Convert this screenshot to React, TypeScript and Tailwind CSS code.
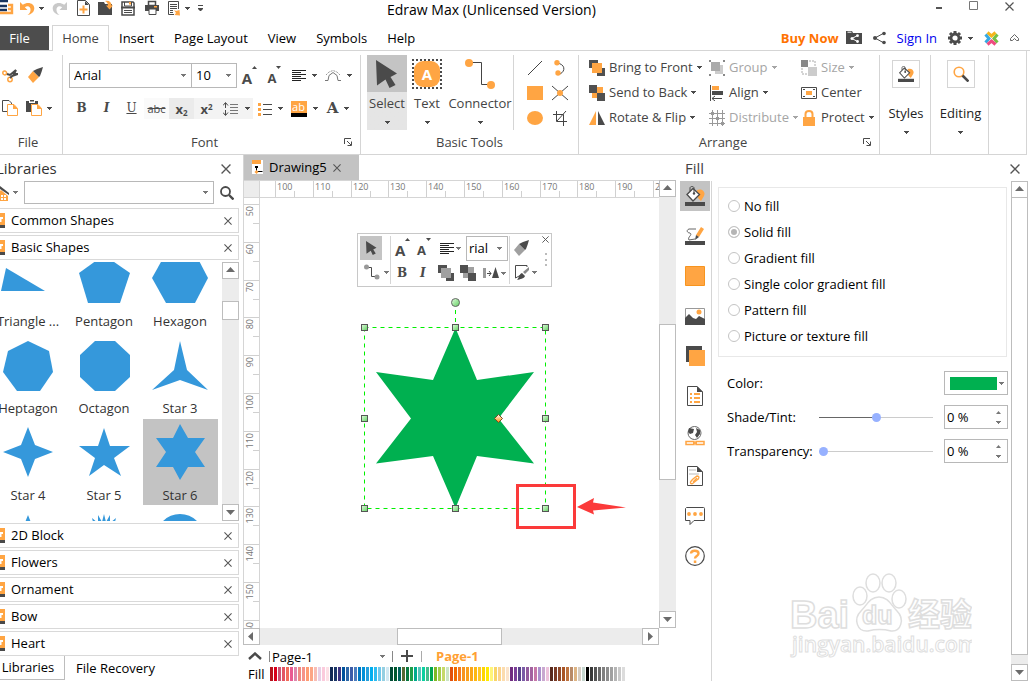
import type { ReactNode } from 'react'
import clsx from 'clsx'

const DARK = '#4a4a4a'
const ORANGE = '#ffa543'
const BLUE = '#3598db'

function Svg({ w = 16, h = 16, children }: { w?: number; h?: number; children: ReactNode }) {
  return (
    <svg width={w} height={h} viewBox={`0 0 ${w} ${h}`} fill="none" className="block shrink-0">
      {children}
    </svg>
  )
}

const Caret = ({ color = DARK }: { color?: string }) => (
  <Svg w={5} h={3}><path d="M0 0h5v1H4v1H3v1H2V2H1V1H0z" fill={color} /></Svg>
)

const Cross = ({ size = 9 }: { size?: number }) => (
  <svg width={size} height={size} viewBox="0 0 9 9" className="block shrink-0">
    <path d="M.5.5l8 8M8.5.5l-8 8" stroke="#555" strokeWidth="1.2" />
  </svg>
)

/* ---------- icons ---------- */

const LogoIcon = () => (
  <Svg w={14} h={16}>
    <path d="M0 1h8M0 6h7M0 10h7" stroke="#16335f" strokeWidth="2.4" />
    <path d="M8 5h4v8H0M8 9h4" stroke={ORANGE} strokeWidth="2.4" />
  </Svg>
)
const UndoIcon = ({ flip, color = ORANGE }: { flip?: boolean; color?: string }) => (
  <Svg w={15} h={16}>
    <g transform={flip ? 'translate(15 0) scale(-1 1)' : undefined}>
      <path d="M0 2v8h7.500L4.800 7.300C8 5 11 7 10.500 10.500c-.3 2-1.500 3.500-3 4.500 4-.7 6.500-3 6.800-6.500C14.500 3.500 8 1.200 2.800 4.800z" fill={color} />
    </g>
  </Svg>
)
const NewIcon = () => (
  <Svg w={13} h={16}>
    <path d="M.5.5h8l4 4v11H.5z" stroke={DARK} /><path d="M8 1v4h4z" fill={DARK} />
    <path d="M6.500 5.500v8M2.500 9.500h8" stroke={ORANGE} strokeWidth="2" />
  </Svg>
)
const OpenIcon = () => (
  <Svg w={15} h={16}>
    <path d="M0 2h6l1 2h7v11H0z" fill={DARK} />
    <path d="M7 1c4-.8 6.500 1 6.500 4.500H15L11.500 9.500 8 5.500h2C10 3.500 9 2 7 1z" fill={ORANGE} />
  </Svg>
)
const SaveIcon = () => (
  <Svg w={14} h={16}>
    <path d="M1 2h11l1 1v12H1z" stroke={DARK} strokeWidth="1.500" /><path d="M3.500 2v4h7V2M3 10.500h8M3 12.500h8" stroke={DARK} />
    <path d="M0 7.500h14" stroke={DARK} strokeWidth="2" /><path d="M8 2h2v2.500H8z" fill={ORANGE} />
  </Svg>
)
const PrintIcon = () => (
  <Svg w={15} h={16}>
    <path d="M3.500 1.500h7v4h-7z" stroke={DARK} strokeWidth="1.500" /><path d="M0 5h14v6H0z" fill={DARK} />
    <path d="M4 9h7v5.500H4z" fill="#fff" stroke={DARK} /><path d="M9 6h3v1.500H9z" fill={ORANGE} />
  </Svg>
)
const ReportIcon = () => (
  <Svg w={13} h={16}>
    <path d="M6 14.500H.5v-13h10V9" stroke={DARK} /><path d="M2 4.500h7M2 6.500h7M2 8.500h7M2 10.500h3M2 12.500h3" stroke={DARK} />
    <path d="M6 10l2 1 3.500-1 .5 5.500-5.500-.5L8 13z" fill={ORANGE} />
  </Svg>
)
const ScissorsIcon = () => (
  <Svg>
    <circle cx="2.700" cy="6" r="1.900" stroke={ORANGE} strokeWidth="1.500" />
    <circle cx="8" cy="12.500" r="2.200" stroke={ORANGE} strokeWidth="1.500" />
    <path d="M5 7l3 1 6-5-2 4h4l-6 2-2 2" stroke={DARK} strokeWidth="2" />
  </Svg>
)
const BrushIcon = ({ color = ORANGE }: { color?: string }) => (
  <Svg>
    <path d="M0 10l5-6 6 6-6 6z" fill={color} /><path d="M5 4l4-2 6-2-1.500 5L12 9l-1 1z" fill={DARK} />
  </Svg>
)
const CopyIcon = () => (
  <Svg>
    <path d="M5 11.500H.5V.5H7L9.500 3v2" stroke={DARK} /><path d="M5.500 4.500H12l3.500 4v7h-10z" fill="#fff" stroke={ORANGE} /><path d="M11 4l5 5h-5z" fill={ORANGE} />
  </Svg>
)
const PasteIcon = () => (
  <Svg>
    <path d="M0 1h3v2h6V1h3v3H5v8H0z" fill={DARK} /><path d="M4 0h4v1.500H4z" fill={DARK} />
    <path d="M5.500 4.500H12l3.500 4v7h-10z" fill="#fff" stroke={ORANGE} /><path d="M11 4l5 5h-5z" fill={ORANGE} />
  </Svg>
)
const FontSizeIcon = ({ down }: { down?: boolean }) => (
  <span className="flex items-start font-bold leading-4 text-[#4a4a4a]">
    <span className={clsx('pt-1', down ? 'text-[13px]' : 'text-[15px]')}>A</span>
    <Svg w={5} h={3}><path d={down ? 'M0 0h5L2.500 3z' : 'M0 3h5L2.500 0z'} fill={DARK} /></Svg>
  </span>
)
const AlignLinesIcon = () => (
  <Svg w={14} h={14}><path d="M0 1.500h14M0 3.500h9M0 5.500h14M0 7.500h9M0 9.500h14M0 11.500h9" stroke="#222" /></Svg>
)
const ArcIcon = () => (
  <Svg w={16} h={12}>
    <path d="M0 10.500h3l1-5 4-3 4 3 1 5h3" stroke="#777" /><path d="M1 5L4 2l4-1.500L12 2l3 3" stroke="#999" strokeDasharray="2 1" />
  </Svg>
)
const SpacingIcon = () => (
  <Svg w={16} h={14}>
    <path d="M2.500 1v5M2.500 8v5M0 3.500L2.500.5 5 3.500M0 10.500l2.500 3 2.500-3" stroke={DARK} />
    <path d="M7 2.500h8M7 5.500h8M7 8.500h8M7 11.500h8" stroke="#777" />
  </Svg>
)
const ListIcon = () => (
  <Svg w={14} h={14}>
    <path d="M0 1h3v3H0zM0 6h3v3H0zM0 11h3v3H0z" fill={ORANGE} /><path d="M5 2.500h9M5 7.500h9M5 12.500h9" stroke={DARK} />
  </Svg>
)
const HighlightIcon = () => (
  <span className="flex w-4 flex-col">
    <span className="bg-[#ffa543] text-center text-[11px] leading-3 text-white">ab</span>
    <span className="h-1 bg-black" />
  </span>
)
const PointerIcon = ({ w = 22, h = 28 }: { w?: number; h?: number }) => (
  <svg width={w} height={h} viewBox="0 0 22 28" className="block"><path d="M0 0l21 13.500-6.500 3.500 5 8-6 3-4-8.500L1 25.500z" fill={DARK} /></svg>
)
const TextToolIcon = () => (
  <span className="grid size-[30px] place-items-center border-2 border-dotted border-[#4a4a4a]">
    <span className="grid size-[26px] place-items-center rounded-[9px] bg-[#ffa543] text-[15px] font-bold leading-5 text-white">A</span>
  </span>
)
const ConnectorIcon = () => (
  <Svg w={30} h={30}>
    <path d="M4 3.500h12.500v22H26" stroke="#444" /><circle cx="4" cy="4" r="4" fill={ORANGE} /><circle cx="26" cy="26" r="4" fill={ORANGE} />
  </Svg>
)
const LineIcon = () => <Svg><path d="M1 15L15 1" stroke="#444" /></Svg>
const CurveIcon = () => (
  <Svg><path d="M5 3c8 1 9 8 3 11" stroke="#444" /><circle cx="5" cy="2.700" r="2.700" fill={ORANGE} /><circle cx="6" cy="13" r="2.700" fill={ORANGE} /></Svg>
)
const SquareIcon = () => <Svg><path d="M0 1h16v14H0z" fill={ORANGE} /></Svg>
const EllipseIcon = () => <Svg><ellipse cx="8" cy="8" rx="8" ry="7" fill={ORANGE} /></Svg>
const CrossNodeIcon = () => (
  <Svg><path d="M0 1l16 14M16 1L0 15" stroke="#444" /><circle cx="8" cy="8" r="3" fill={ORANGE} /></Svg>
)
const CropIcon = () => (
  <Svg><path d="M4.500 1v10.500H15M1 4.500h10.500V16M14 1L5 11" stroke="#444" /></Svg>
)
const FrontIcon = ({ color = ORANGE }: { color?: string }) => (
  <Svg><path d="M0 0h9v8H0zM8 8h8v8H8z" fill="#505050" /><path d="M3 3h10v10H3z" fill={color} /></Svg>
)
const BackIcon = ({ color = ORANGE }: { color?: string }) => (
  <Svg><path d="M3 2h11v11H3z" fill={color} /><path d="M0 0h8v8H0zM8 8h8v8H8z" fill="#505050" /></Svg>
)
const FlipIcon = () => (
  <Svg><path d="M7 1v14H0z" fill={ORANGE} /><path d="M9 1v14h7z" fill={DARK} /></Svg>
)
const GroupIcon = () => (
  <Svg>
    <path d="M6 5h8v9H6z" fill="#ccc" /><path d="M2 2h9v9H2z" fill="#aaa" />
    <path d="M0 0h2v2H0zM14 0h2v2h-2zM0 14h2v2H0zM14 14h2v2h-2z" fill="#888" />
  </Svg>
)
const AlignIcon = () => (
  <Svg><path d="M1.500 0v16" stroke={DARK} /><path d="M3 1h7v4H3z" fill={ORANGE} /><path d="M3 6h11v4H3z" fill={DARK} /><path d="M3 13.500h10M6 11l-3 2.500L6 16" stroke={DARK} /></Svg>
)
const DistributeIcon = () => (
  <Svg><path d="M3.500 0v16M8.500 0v16M13.500 0v16M0 3.500h16M0 8.500h16M0 13.500h16" stroke="#999" /><path d="M2 2h3v3H2zM7 7h3v3H7zM12 12h3v3h-3z" fill="#999" /></Svg>
)
const SizeIcon = () => (
  <Svg><path d="M0 0h7v7H0z" fill="#888" /><path d="M7 7h9v9H7z" fill="#ccc" /><path d="M1 8v6h5M8 1h6v5" stroke="#aaa" strokeDasharray="2 1" /></Svg>
)
const CenterIcon = () => (
  <Svg><path d="M.5 2.500h15v11H.5z" stroke={DARK} /><path d="M5 6h6v4H5z" fill={ORANGE} /><path d="M2 4h2v1H2zM12 4h2v1h-2zM2 11h2v1H2zM12 11h2v1h-2z" fill={DARK} /></Svg>
)
const LockIcon = () => (
  <Svg><path d="M4.500 8V4c0-4 7-4 7 0v4" stroke={ORANGE} strokeWidth="2" /><path d="M2 7h12v9H2z" fill={ORANGE} /></Svg>
)
const BucketIcon = ({ size = 20 }: { size?: number }) => (
  <svg width={size} height={size} viewBox="0 0 20 20" fill="none" className="block">
    <path d="M12 4c5-2 9 2 7 6-1 2-2 3-3 5l-3-3z" fill={ORANGE} />
    <path d="M2 8.500L8 2.500l6.500 6L8 15z" fill="#fff" stroke={DARK} strokeWidth="1.300" />
    <path d="M5 5V2c0-2 4-2 4 0v5" stroke={DARK} /><circle cx="9" cy="7.500" r="1.200" fill={DARK} />
    <path d="M0 16h20v4H0z" fill={DARK} />
  </svg>
)
const LensIcon = () => (
  <Svg><circle cx="6" cy="6" r="4.800" stroke={ORANGE} strokeWidth="1.600" /><path d="M9.500 9.500l6 6" stroke={DARK} strokeWidth="2.600" /></Svg>
)
const SearchIcon = () => (
  <Svg w={14} h={14}><circle cx="5.500" cy="5.500" r="4.500" stroke={DARK} strokeWidth="1.800" /><path d="M9 9l4.500 4.500" stroke={DARK} strokeWidth="2.400" /></Svg>
)
const LauncherIcon = () => (
  <Svg w={8} h={8}><path d="M.5 6V.5H7M3 3l4 4M7.500 3.500v4h-4" stroke={DARK} /></Svg>
)
const ShareFolderIcon = () => (
  <Svg>
    <path d="M0 1h6l1 2h9v11H0z" fill={DARK} /><path d="M1.500 2.200h4" stroke="#fff" />
    <path d="M11.500 5.500L6 8.500l5.500 3" stroke="#fff" /><circle cx="6" cy="8.500" r="1.500" fill="#fff" /><circle cx="11.500" cy="5.700" r="1.400" fill="#fff" /><circle cx="11.500" cy="11.500" r="1.400" fill="#fff" />
  </Svg>
)
const ShareIcon = () => (
  <Svg w={13} h={14}>
    <path d="M11 2L2 7l9 5" stroke={DARK} /><circle cx="2" cy="7" r="2" fill={DARK} /><circle cx="11" cy="2.500" r="1.800" fill={DARK} /><circle cx="11" cy="11.500" r="1.800" fill={DARK} />
  </Svg>
)
const GearIcon = () => (
  <Svg w={14} h={14}>
    <circle cx="7" cy="7" r="4" stroke={DARK} strokeWidth="2.800" />
    <path d="M7 0v2M7 12v2M0 7h2M12 7h2M2 2l1.500 1.500M10.500 10.500L12 12M12 2l-1.500 1.500M3.500 10.500L2 12" stroke={DARK} strokeWidth="3" />
  </Svg>
)
const FlowerIcon = () => (
  <Svg w={15} h={15}>
    <path d="M3.500 1.500L7.500 5l4-3.500" stroke="#f5b51b" strokeWidth="3" /><path d="M1.500 3.500L5 7.500l-3.500 4" stroke="#37a9e1" strokeWidth="3" />
    <path d="M13.500 3.500L10 7.500l3.500 4" stroke="#76c043" strokeWidth="3" /><path d="M3.500 13.500l4-3.500 4 3.500" stroke="#ef4b81" strokeWidth="3" />
  </Svg>
)

/* ---------- small controls ---------- */

function ScrollArrow({ dir }: { dir: 'up' | 'down' | 'left' | 'right' }) {
  const d = { up: 'M0 6h9L4.500 1z', down: 'M0 2h9L4.500 7z', left: 'M6 0v9L1 4.500z', right: 'M2 0v9l5-4.500z' }[dir]
  return (
    <button aria-label={`Scroll ${dir}`} className="grid size-[17px] shrink-0 place-items-center border border-[#bdbdbd] bg-white">
      <Svg w={9} h={9}><path d={d} fill="#6b6b6b" /></Svg>
    </button>
  )
}

function Cell({ label, caret, children, className }: { label: string; caret?: boolean; children: ReactNode; className?: string }) {
  return (
    <button aria-label={label} className={clsx('flex h-[21px] shrink-0 items-center justify-center', caret ? 'w-[34px] gap-1.5' : 'w-[25px]', className)}>
      {children}
      {caret && <Caret />}
    </button>
  )
}

function Group({ title, launcher, className, children }: { title: string; launcher?: boolean; className?: string; children: ReactNode }) {
  return (
    <section className={clsx('relative flex shrink-0 flex-col border-r border-[#d5d5d5] text-[#444]', className)}>
      <div className="h-[79px]">{children}</div>
      <div className="text-center leading-4">{title}</div>
      {launcher && (
        <button aria-label={`${title} options`} className="absolute bottom-2 right-2"><LauncherIcon /></button>
      )}
    </section>
  )
}

function MenuItem({ icon, label, caret, muted }: { icon: ReactNode; label: string; caret?: boolean; muted?: boolean }) {
  return (
    <button disabled={muted} className={clsx('flex h-[25px] items-center gap-1 whitespace-nowrap', muted ? 'text-[#a5a5a5]' : 'text-[#444]')}>
      {icon}
      {label}
      {caret && <Caret color={muted ? '#a5a5a5' : DARK} />}
    </button>
  )
}

function Combo({ label, value, className }: { label: string; value: string; className?: string }) {
  return (
    <div className={clsx('relative h-[25px] border border-[#b8b8b8] bg-white text-black', className)}>
      <select aria-label={label} className="h-full w-full appearance-none bg-transparent pl-1 outline-none">
        <option>{value}</option>
      </select>
      <span className="pointer-events-none absolute right-[5px] top-[10px]"><Caret color="#777" /></span>
    </div>
  )
}

/* ---------- top ---------- */

function TitleBar() {
  return (
    <header className="flex h-[26px] items-start justify-between text-black">
      <div className="flex w-[387px] shrink-0 items-center">
        <LogoIcon />
        <div className="flex items-center gap-2 pl-1.5">
          <button aria-label="Undo" className="flex items-center gap-1"><UndoIcon /><Caret /></button>
          <button aria-label="Redo"><UndoIcon flip color="#c9c9c9" /></button>
          <button aria-label="New" className="pl-0.5"><NewIcon /></button>
          <button aria-label="Open"><OpenIcon /></button>
          <button aria-label="Save"><SaveIcon /></button>
          <button aria-label="Print" className="pl-0.5"><PrintIcon /></button>
          <button aria-label="Export" className="flex items-center gap-1"><ReportIcon /><Caret /></button>
          <button aria-label="Customize toolbar"><Svg w={5} h={8}><path d="M0 1.500h5" stroke={DARK} /><path d="M0 4h5v1L3 7H2L0 5z" fill={DARK} /></Svg></button>
        </div>
      </div>
      <h1 className="text-[14px] leading-[19px]">Edraw Max (Unlicensed Version)</h1>
      <div className="ml-auto flex items-center gap-[27px] pr-[16px] pt-px">
        <button aria-label="Minimize"><Svg w={6} h={10}><path d="M0 7h6" stroke="#555" strokeWidth="2" /></Svg></button>
        <button aria-label="Maximize"><Svg w={9} h={10}><path d="M.5.5h8v8h-8z" stroke="#777" /></Svg></button>
        <button aria-label="Close"><Cross /></button>
      </div>
    </header>
  )
}

function MenuBar() {
  return (
    <nav className="flex h-[25px] items-end border-b border-[#d5d5d5] text-black">
      <button className="h-6 w-[49px] self-start bg-[#4d4d4d] pr-2.5 text-white">File</button>
      <button className="relative top-px ml-[3px] h-[26px] w-[57px] shrink-0 border border-b-0 border-[#d5d5d5] bg-white text-[#444]">Home</button>
      <div className="flex h-full items-center gap-5 pl-2.5">
        {['Insert', 'Page Layout', 'View', 'Symbols', 'Help'].map(t => (
          <button key={t} className="whitespace-nowrap">{t}</button>
        ))}
      </div>
      <div className="ml-auto flex h-full items-center gap-[11px] pr-[11px]">
        <a href="#buy" className="-mr-1 whitespace-nowrap font-bold text-[#ff7200]">Buy Now</a>
        <button aria-label="Share folder"><ShareFolderIcon /></button>
        <button aria-label="Share"><ShareIcon /></button>
        <a href="#signin" className="whitespace-nowrap text-[#0000ee]">Sign In</a>
        <button aria-label="Settings" className="flex items-center gap-1.5"><GearIcon /><Caret /></button>
        <button aria-label="Apps"><FlowerIcon /></button>
        <button aria-label="Collapse ribbon"><Svg w={9} h={8}><path d="M.5 4.500l4-4 4 4M.5 4.500v2h2l2-2 2 2h2v-2" stroke="#666" /></Svg></button>
      </div>
    </nav>
  )
}

function BigTool({ label, className, icon }: { label: string; className: string; icon: ReactNode }) {
  return (
    <button className={clsx('flex h-[75px] flex-col items-center', className)}>
      <span className="flex h-[38px] items-center justify-center">{icon}</span>
      <span className="leading-5">{label}</span>
      <span className="pt-2"><Caret /></span>
    </button>
  )
}

function Ribbon() {
  return (
    <div className="mr-[3px] flex h-[104px] shrink-0 overflow-hidden border-b border-r border-[#d5d5d5] pt-1">
      <Group title="File" className="w-[63px] pr-1.5">
        <div className="flex h-[40px] items-center gap-2.5 pl-0.5">
          <button aria-label="Cut"><ScissorsIcon /></button>
          <button aria-label="Format painter"><BrushIcon /></button>
        </div>
        <div className="flex h-[26px] items-center gap-2 pl-0.5">
          <button aria-label="Copy"><CopyIcon /></button>
          <button aria-label="Paste" className="flex items-center gap-[5px]"><PasteIcon /><Caret /></button>
        </div>
      </Group>

      <Group title="Font" launcher className="w-[298px] pl-1.5 pr-5">
        <div className="flex items-center pt-2">
          <Combo label="Font" value="Arial" className="w-[123px] shrink-0" />
          <Combo label="Font size" value="10" className="-ml-px w-[46px] shrink-0" />
          <Cell label="Grow font"><FontSizeIcon /></Cell>
          <Cell label="Shrink font"><FontSizeIcon down /></Cell>
          <Cell label="Alignment" caret><AlignLinesIcon /></Cell>
          <Cell label="Text path" caret><ArcIcon /></Cell>
        </div>
        <div className="flex items-center pt-2.5 text-[#4a4a4a]">
          <Cell label="Bold"><b className="font-['DejaVu_Serif'] text-[12px]">B</b></Cell>
          <Cell label="Italic"><b className="font-['DejaVu_Serif'] text-[12px] italic">I</b></Cell>
          <Cell label="Underline"><span className="font-['DejaVu_Serif'] text-[12px] underline">U</span></Cell>
          <Cell label="Strikethrough" className="bg-[#fafafa]"><s className="text-[11px]">abc</s></Cell>
          <Cell label="Subscript" className="bg-[#ebebeb]"><b className="leading-4">x<sub className="text-[8px]">2</sub></b></Cell>
          <Cell label="Superscript" className="bg-[#f3f3f3]"><b className="leading-4">x<sup className="text-[8px]">2</sup></b></Cell>
          <Cell label="Line spacing" caret className="bg-[#f3f3f3]"><SpacingIcon /></Cell>
          <Cell label="Bullets" caret><ListIcon /></Cell>
          <Cell label="Highlight" caret><HighlightIcon /></Cell>
          <Cell label="Font color" caret><b className="font-['DejaVu_Serif'] text-[15px]">A</b></Cell>
        </div>
      </Group>

      <Group title="Basic Tools" className="w-[218px]">
        <div className="flex pl-1.5">
          <BigTool label="Select" className="w-10 bg-linear-to-b from-[#c4c4c4] from-50% to-[#e5e5e5] to-50%" icon={<PointerIcon />} />
          <BigTool label="Text" className="w-10" icon={<TextToolIcon />} />
          <BigTool label="Connector" className="w-[66px]" icon={<ConnectorIcon />} />
          <div className="grid grid-cols-[25px_25px] grid-rows-[25px_25px_25px] place-items-center border-l border-[#d5d5d5] pl-2">
            <button aria-label="Line"><LineIcon /></button>
            <button aria-label="Curve"><CurveIcon /></button>
            <button aria-label="Rectangle"><SquareIcon /></button>
            <button aria-label="Edit points"><CrossNodeIcon /></button>
            <button aria-label="Ellipse"><EllipseIcon /></button>
            <button aria-label="Crop"><CropIcon /></button>
          </div>
        </div>
      </Group>

      <Group title="Arrange" launcher className="w-[301px] pr-3">
        <div className="grid grid-cols-[120px_92px_1fr] pl-2.5">
          <MenuItem icon={<FrontIcon />} label="Bring to Front" caret />
          <MenuItem icon={<GroupIcon />} label="Group" caret muted />
          <MenuItem icon={<SizeIcon />} label="Size" caret muted />
          <MenuItem icon={<BackIcon />} label="Send to Back" caret />
          <MenuItem icon={<AlignIcon />} label="Align" caret />
          <MenuItem icon={<CenterIcon />} label="Center" />
          <MenuItem icon={<FlipIcon />} label="Rotate & Flip" caret />
          <MenuItem icon={<DistributeIcon />} label="Distribute" caret muted />
          <MenuItem icon={<LockIcon />} label="Protect" caret />
        </div>
      </Group>

      {[
        { label: 'Styles', icon: <BucketIcon size={16} />, w: 'w-[51px]' },
        { label: 'Editing', icon: <LensIcon />, w: 'w-[58px]' },
      ].map(b => (
        <button key={b.label} className={clsx('flex flex-col items-center border-r border-[#d5d5d5] pl-0.5 pt-[5px] text-[#222]', b.w)}>
          <span className="grid size-7 place-items-center border border-[#d5d5d5]">{b.icon}</span>
          <span className="pt-[15px] leading-5">{b.label}</span>
          <span className="pt-2"><Caret /></span>
        </button>
      ))}
    </div>
  )
}

/* ---------- libraries ---------- */

const shapes = [
  { name: 'Triangle ...', points: '6,18 1,41 45,41' },
  { name: 'Pentagon', points: '28,5 54,23 44,53 12,53 3,23' },
  { name: 'Hexagon', points: '0,28 14,3 43,3 56,28 43,53 14,53' },
  { name: 'Heptagon', points: '28,4 49,14 53,35 40,54 17,54 3,35 8,14' },
  { name: 'Octagon', points: '19,4 39,4 54,18 54,40 39,54 19,54 4,40 4,18' },
  { name: 'Star 3', points: '28,4 35,33 56,53 28,43 0,53 22,33' },
  { name: 'Star 4', points: '28,3 35,21 53,28 35,35 28,53 21,35 3,28 21,21' },
  { name: 'Star 5', points: '28,4 34,22 54,22 38,34 45,52 28,41 13,52 19,34 3,22 22,22' },
  { name: 'Star 6', points: '28,0 36,14 53,14 43,28 53,43 36,43 28,56 21,43 4,43 14,28 4,14 21,14' },
]

function LibraryRow({ name }: { name: string }) {
  return (
    <div className="flex h-[25px] shrink-0 items-center border border-l-0 border-[#d9d9d9] text-black">
      <span className="mr-1.5 h-[15px] w-[5px] border-b-[3px] border-[#4a4a4a] bg-[#ffa543]">
        <Svg w={5} h={12}><path d="M0 4h3v2H1.500v3H0z" fill="#fff" /></Svg>
      </span>
      <button className="grow text-left">{name}</button>
      <button aria-label={`Close ${name}`} className="pr-1.5"><Cross size={8} /></button>
    </div>
  )
}

function Libraries() {
  return (
    <aside className="flex w-[239px] shrink-0 flex-col overflow-hidden">
      <div className="flex h-[26px] items-center justify-between pr-2 pt-px">
        <h2 className="-ml-1 text-[15px] text-[#333]">Libraries</h2>
        <button aria-label="Close libraries"><Cross size={10} /></button>
      </div>
      <div className="mb-1 flex h-[23px] items-center">
        <button aria-label="Library home" className="flex w-6 items-center gap-1">
          <Svg w={9} h={16}><path d="M0 6l1-1 7 6v5H0z" fill={ORANGE} /><path d="M0 1l9 7v2L0 4z" fill={DARK} /><path d="M1 10h2v2H1zM4 10h2v2H4zM1 13h2v2H1zM4 13h2v2H4z" fill="#fff" /></Svg>
          <Caret color="#777" />
        </button>
        <div className="relative h-full w-[190px] border border-[#b8b8b8]">
          <input aria-label="Search shapes" className="h-full w-full px-1 pr-4 outline-none" />
          <span className="pointer-events-none absolute right-[5px] top-[9px]"><Caret color="#777" /></span>
        </div>
        <button aria-label="Search" className="pl-1.5"><SearchIcon /></button>
      </div>
      <div className="flex flex-col gap-0.5">
        <LibraryRow name="Common Shapes" />
        <LibraryRow name="Basic Shapes" />
      </div>
      <div className="my-0.5 flex min-h-0 flex-1 basis-0 justify-between">
        <div className="-ml-[9px] h-full overflow-hidden text-[#333]">
          <div className="-mt-[17px] grid grid-cols-[75px_75px_75px] gap-px">
            {shapes.map(s => (
              <button key={s.name} className={clsx('flex h-[86px] flex-col items-center pr-px pt-[5px]', s.name === 'Star 6' && 'bg-[#c3c3c3]')}>
                <Svg w={56} h={56}><polygon points={s.points} fill={BLUE} /></Svg>
                <span className="whitespace-nowrap pt-[5px] leading-5">{s.name}</span>
              </button>
            ))}
            <div className="flex justify-center pr-px pt-[5px]"><Svg w={56} h={56}><path d="M28 4l8 20H20z" fill={BLUE} /></Svg></div>
            <div className="flex justify-center pr-px pt-[5px]"><Svg w={56} h={56}><path d="M28 3l2 8 4-7v8l6-5-3 12H19L16 7l6 5V4l4 7z" fill={BLUE} /></Svg></div>
            <div className="flex justify-center pr-px pt-[5px]"><Svg w={56} h={56}><circle cx="28" cy="27" r="24" fill={BLUE} /></Svg></div>
          </div>
        </div>
        <div className="flex w-[17px] flex-col bg-[#ececec]">
          <ScrollArrow dir="up" />
          <div className="mt-[22px] h-[19px] border border-[#bdbdbd] bg-white" />
          <div className="mt-auto"><ScrollArrow dir="down" /></div>
        </div>
      </div>
      <div className="flex flex-col gap-0.5">
        {['2D Block', 'Flowers', 'Ornament', 'Bow', 'Heart'].map(n => <LibraryRow key={n} name={n} />)}
      </div>
      <div className="mb-px flex h-6 shrink-0 text-black">
        <button className="w-[65px] border-b border-r border-[#bdbdbd] pr-2">Libraries</button>
        <button className="pl-[11px]">File Recovery</button>
      </div>
    </aside>
  )
}

/* ---------- canvas ---------- */

const STEP = 37.8

function TopRuler() {
  return (
    <svg height="17" className="min-w-0 flex-1 border-b border-[#d5d5d5] text-[9px]" fill="#777">
      {Array.from({ length: 24 }, (_, i) => {
        const x = Math.round(15 + i * STEP)
        return (
          <g key={i}>
            <path d={`M${x + 0.5} 0v17M${Math.round(x + STEP / 2) + 0.5} 10v7`} stroke="#d0d0d0" />
            <text x={x + 2} y="9">{100 + i * 10}</text>
          </g>
        )
      })}
    </svg>
  )
}

function SideRuler() {
  return (
    <svg width="17" height="100%" className="shrink-0 border-x border-[#d5d5d5] text-[9px]" fill="#777">
      {Array.from({ length: 24 }, (_, i) => {
        const y = Math.round(6 + i * STEP)
        return (
          <g key={i}>
            <path d={`M0 ${y + 0.5}h17M9 ${Math.round(y + STEP / 2) + 0.5}h8`} stroke="#d0d0d0" />
            <text transform={`translate(9 ${y + 2}) rotate(-90)`} textAnchor="end">{50 + i * 10}</text>
          </g>
        )
      })}
    </svg>
  )
}

const handles = [[104, 129], [195, 129], [285, 129], [104, 220], [285, 220], [104, 310], [195, 310], [285, 310]]

function Drawing() {
  return (
    <svg className="absolute inset-0 h-full w-full" fill="none">
      <defs>
        <linearGradient id="handle" x2="1" y2="1"><stop stopColor="#e4fbe0" /><stop offset="1" stopColor="#5fd15f" /></linearGradient>
        <linearGradient id="knob" x2="0" y2="1"><stop stopColor="#fff" /><stop offset="1" stopColor="#ff8a00" /></linearGradient>
      </defs>
      <polygon points="195.500,130 217,182 274,174 238.500,220.500 274,265.500 217,258 195.500,310 173,258 116,265.500 151,220.500 116,174 173,182" fill="#00b050" />
      <path d="M104.500 129.500h181v181h-181zM195.500 104v25" stroke="#00f000" strokeDasharray="4 4" />
      <circle cx="195.500" cy="104.500" r="4" fill="url(#handle)" stroke="#666" />
      {handles.map(([x, y]) => (
        <rect key={`${x}-${y}`} x={x - 2.5} y={y - 2.5} width="6" height="6" fill="url(#handle)" stroke="#555" />
      ))}
      <path d="M238.500 216.500l4 4-4 4-4-4z" fill="url(#knob)" stroke="#7a4a20" />
      <rect x="257.500" y="287.500" width="57" height="42" stroke="#fb3a3a" strokeWidth="3" />
      <path d="M317 309l17-9 -1 4.500 33 5 -33 3 1 4z" fill="#fb3a3a" />
    </svg>
  )
}

function FloatingToolbar() {
  const btn = 'flex h-6 items-center gap-1'
  return (
    <div className="absolute left-[97px] top-[35px] flex h-[54px] w-[195px] border border-[#c8c8c8] bg-white p-0.5 text-[#4a4a4a]">
      <div className="w-[30px]">
        <button aria-label="Select" className="grid h-6 w-[22px] place-items-center bg-[#c4c4c4]"><PointerIcon w={11} h={14} /></button>
        <button aria-label="Connector" className={clsx(btn, 'pl-1')}>
          <Svg w={16} h={16}><path d="M3 3.500h4.500v9H13" stroke={DARK} /><circle cx="2.500" cy="3" r="2.500" fill="#999" /><circle cx="13" cy="13" r="2.500" fill="#999" /></Svg>
          <Caret color="#777" />
        </button>
      </div>
      <div className="w-[120px] border-x border-[#d5d5d5] pl-1">
        <div className="flex items-center">
          <span className="w-[22px]"><button aria-label="Grow font"><FontSizeIcon /></button></span>
          <span className="w-[23px]"><button aria-label="Shrink font"><FontSizeIcon down /></button></span>
          <button aria-label="Alignment" className="flex h-6 w-[26px] items-center gap-0.5"><AlignLinesIcon /><Caret color="#777" /></button>
          <Combo label="Font" value="rial" className="w-[42px] shrink-0 [&>select]:pl-0.5" />
        </div>
        <div className="flex items-center">
          <button aria-label="Bold" className={clsx(btn, "w-[23px] pl-0.5 font-['DejaVu_Serif'] text-[12px] font-bold")}>B</button>
          <button aria-label="Italic" className={clsx(btn, "w-[20px] pl-0.5 font-['DejaVu_Serif'] text-[12px] font-bold italic")}>I</button>
          <button aria-label="Bring to front" className={clsx(btn, 'w-[22px]')}><FrontIcon color="#a0a0a0" /></button>
          <button aria-label="Send to back" className={clsx(btn, 'w-[23px]')}><BackIcon color="#a0a0a0" /></button>
          <button aria-label="Flip" className="flex h-6 items-center gap-0.5">
            <Svg w={16} h={12}><path d="M0 1h3v10H0z" fill="#999" /><path d="M4 6.500h4M6 4l2 2.500L6 9" stroke={DARK} /><path d="M12.500 0l3.500 11H9z" fill={DARK} /></Svg>
            <Caret color="#777" />
          </button>
        </div>
      </div>
      <div className="pl-1">
        <button aria-label="Format painter" className={btn}><BrushIcon color="#a0a0a0" /></button>
        <button aria-label="Line style" className="flex h-6 items-center gap-0.5">
          <Svg><path d="M6 11.500L1.500 14V1.500H13V3" stroke={DARK} /><path d="M15 3L9 8l2 2 4-4z" fill="#888" /><path d="M8 9l3 3c-1 3-5 3-8 4 2-2 2-6 5-7z" fill={DARK} /></Svg>
          <Caret color="#777" />
        </button>
      </div>
      <div className="flex grow flex-col items-end gap-[9px]">
        <button aria-label="Close toolbar"><Cross size={7} /></button>
        <Svg w={5} h={16}><path d="M1 1h2v2H1zM1 7h2v2H1zM1 12h2v2H1z" fill="#bbb" /></Svg>
      </div>
    </div>
  )
}

const palette = [
  '#b5121b', '#d9001b', '#cc5577', '#e25563', '#f26d5b', '#ea5a92', '#dd87ad', '#ef8a82', '#f5938a', '#ff9c73', '#fca585', '#f8bdb5', '#e8cfe6', '#fbcbdc', '#fde0e6',
  '#122a54', '#1c3768', '#3c3480', '#00529b', '#2e68a8', '#3c5ca8', '#4d7dbd', '#0077c0', '#0090d8', '#26a0dc', '#00aeef', '#2ebcf0', '#6fc8ec', '#94cfe2', '#cfe8f2',
  '#004b34', '#00582e', '#00645c', '#566a34', '#0a7a40', '#1f9e49', '#00ab8e', '#54c5b8', '#0bd0a0', '#43be8d', '#00a651', '#7fb926', '#a3ce4b', '#c6d96a', '#cbe5c4',
  '#e2500c', '#f06a00', '#f47b20', '#f7941e', '#f9a01b', '#faa61a', '#fdb813', '#ffc627', '#ffd500', '#ffea00', '#fff57a', '#f8d569', '#fbd38c', '#fcdcae', '#fbe4cb',
  '#6f2c7f', '#7b3f98', '#59438c', '#7a5ba6', '#925b9e', '#a3629f', '#c678a8', '#ab8fcc', '#c9a8d0', '#edc2dc',
  '#592a1d', '#7a3b26', '#90492b', '#a85426', '#bf7440', '#b88a68', '#ddb484', '#d5ccc2', '#c4d5cd',
  '#000', '#3a3a3a', '#555', '#6b6b6b', '#808080', '#8d8d8d', '#a0a0a0', '#b5b5b5', '#cacaca', '#dcdcdc',
]

function Workspace() {
  return (
    <main className="ml-1 flex min-w-0 flex-1 flex-col">
      <div className="flex h-[25px] w-[116px] items-center border-l border-[#d5d5d5] bg-[#c3c3c3] pl-2 text-black">
        <Svg w={12} h={15}><path d="M0 0h11v14H0z" fill="#fff" /><path d="M0 0h9v4H0z" fill={ORANGE} /><path d="M3 6h3v2H3z" fill="#000" /><path d="M4.500 8v3.500h6" stroke="#000" /><path d="M4.500 10l2 2-2 2-2-2z" fill={ORANGE} /></Svg>
        <span className="grow pl-[5px]">Drawing5</span>
        <button aria-label="Close drawing" className="pr-[18px]"><Cross size={8} /></button>
      </div>
      <div className="flex min-h-0 flex-1">
        <div className="flex min-w-0 flex-1 flex-col">
          <div className="flex h-[18px] border-t border-[#d5d5d5]">
            <span className="w-[17px] border-x border-b border-[#d5d5d5] bg-[#ececec]" />
            <TopRuler />
          </div>
          <div className="flex min-h-0 flex-1">
            <SideRuler />
            <div className="relative min-w-0 flex-1 overflow-hidden bg-white">
              <Drawing />
              <FloatingToolbar />
            </div>
          </div>
          <div className="flex h-[17px] shrink-0 bg-[#ececec]">
            <ScrollArrow dir="left" />
            <div className="ml-[33%] mr-auto w-[105px] border border-[#bdbdbd] bg-white" />
            <ScrollArrow dir="right" />
          </div>
        </div>
        <div className="mb-[17px] flex w-[17px] flex-col bg-[#ececec]">
          <ScrollArrow dir="up" />
          <div className="mt-[127px] h-[156px] border border-[#bdbdbd] bg-white" />
          <div className="mt-auto"><ScrollArrow dir="down" /></div>
        </div>
      </div>
      <div className="flex h-[22px] items-center pl-[5px] text-black">
        <button aria-label="Expand pages"><Svg w={14} h={8}><path d="M1 7l6-5.500L13 7" stroke={DARK} strokeWidth="2.400" /></Svg></button>
        <div className="relative ml-[7px] h-[11px] w-[124px] border-x border-[#888]">
          <select aria-label="Page" className="relative -top-1 h-5 w-full appearance-none bg-transparent pl-0.5 leading-5 outline-none"><option>Page-1</option></select>
          <span className="pointer-events-none absolute right-[7px] top-1"><Caret color="#777" /></span>
        </div>
        <button aria-label="Add page" className="px-2"><Svg w={12} h={12}><path d="M6 0v12M0 6h12" stroke={DARK} strokeWidth="2" /></Svg></button>
        <button className="flex items-center gap-3.5 font-bold leading-5 text-[#ffa033]"><span className="h-[11px] w-px bg-[#aaa]" />Page-1</button>
      </div>
      <div className="flex h-[14px] items-center pl-[5px] text-black">
        <span className="w-[22px] leading-[14px]">Fill</span>
        <div className="flex h-full min-w-0 gap-px overflow-hidden">
          {palette.map(c => (
            <button key={c} aria-label={`Fill ${c}`} className="w-[3px] shrink-0" style={{ backgroundColor: c }} />
          ))}
        </div>
      </div>
    </main>
  )
}

/* ---------- fill panel ---------- */

const sideIcons: { label: string; icon: ReactNode }[] = [
  { label: 'Fill', icon: <BucketIcon /> },
  { label: 'Line', icon: <Svg w={20} h={20}><path d="M11 3H4c-3 1-2 4 1 4 3 2-3 4-1 7l6-1" stroke="#666" /><path d="M16 1l3 2-5 8-3-2z" fill={ORANGE} /><path d="M11 9l3 2-4 3z" fill={DARK} /><path d="M0 15h20v4H0z" fill={DARK} /></Svg> },
  { label: 'Color', icon: <Svg w={20} h={20}><path d="M.5.5h19v19H.5z" fill={ORANGE} stroke="#f7941e" /></Svg> },
  { label: 'Picture', icon: <Svg w={20} h={20}><path d="M.5 2.500h19v16H.5z" stroke="#999" /><path d="M0 12l4-4 4 4 3 1 3-3 6 3v6H0z" fill={DARK} /><circle cx="14" cy="6" r="2.500" fill={ORANGE} /></Svg> },
  { label: 'Shadow', icon: <Svg w={20} h={20}><path d="M1 0h16v16H1z" fill={DARK} /><path d="M4 4h16v16H4z" fill={ORANGE} /></Svg> },
  { label: 'Page', icon: <Svg w={20} h={20}><path d="M2.500.5H12L17.500 6v13.500h-15z" stroke={DARK} /><path d="M12 0l6 6h-6z" fill={DARK} /><path d="M5 8h2M5 12h2M5 16h2M9 8h6M9 12h6M9 16h6" stroke={ORANGE} strokeWidth="2" /></Svg> },
  { label: 'Hyperlink', icon: <Svg w={20} h={20}><circle cx="9.500" cy="7" r="6.500" stroke="#666" /><path d="M4 2l5 1-1 4-3 1-2-2zM11 2l4 2v4l-3 4-2-3 2-3z" fill={DARK} /><path d="M1 15.500h8v3H1zM11 15.500h8v3h-8zM8 17h4" stroke={ORANGE} strokeWidth="1.500" fill="#fff" /></Svg> },
  { label: 'Attachment', icon: <Svg w={20} h={20}><path d="M2.500.5H12L17.500 6v13.500h-15z" stroke={DARK} /><path d="M12 0l6 6h-6z" fill={DARK} /><path d="M4 4h7M4 8h10" stroke="#ddd" strokeWidth="2" /><path d="M7 18c-3-1-1-3 1-5l4-3c3 0 2 3 0 4l-5 4M8 16l4-4" stroke={ORANGE} strokeWidth="1.300" /></Svg> },
  { label: 'Comment', icon: <Svg w={20} h={20}><path d="M1.500 1.500h17a1 1 0 0 1 1 1v12H9l-4 4v-4H.5v-12z" stroke={DARK} /><circle cx="4" cy="8" r="1.900" fill={ORANGE} /><circle cx="10" cy="8" r="1.900" fill={ORANGE} /><circle cx="16" cy="8" r="1.900" fill={ORANGE} /></Svg> },
  { label: 'Help', icon: <Svg w={20} h={20}><circle cx="10" cy="10" r="9.300" stroke={DARK} strokeWidth="1.200" /><path d="M6 7.500c.3-4 7.500-3.500 7.500 0 0 2.500-3.300 2.500-3.500 5" stroke={ORANGE} strokeWidth="2.400" /><path d="M8.800 14.500h2.500V17H8.800z" fill={ORANGE} /></Svg> },
]

const fillKinds = ['No fill', 'Solid fill', 'Gradient fill', 'Single color gradient fill', 'Pattern fill', 'Picture or texture fill']

const slider =
  "h-[9px] w-[114px] appearance-none bg-size-[100%_1px] bg-center bg-no-repeat [&::-webkit-slider-thumb]:size-[9px] [&::-webkit-slider-thumb]:appearance-none [&::-webkit-slider-thumb]:rounded-full [&::-webkit-slider-thumb]:bg-[#97b1ff]"

function SliderRow({ id, label, value, track }: { id: string; label: string; value: number; track: string }) {
  return (
    <div className="flex h-6 items-center">
      <label htmlFor={id} className="w-[92px] whitespace-nowrap">{label}</label>
      <input id={id} type="range" defaultValue={value} className={clsx(slider, track)} />
      <div className="relative ml-auto h-6 w-16 border border-[#b8b8b8]">
        <input aria-label={`${label} value`} defaultValue="0 %" className="h-full w-full pl-0.5 outline-none" />
        <span className="absolute inset-y-0 right-1.5 flex flex-col justify-center gap-[7px]">
          <button type="button" aria-label="Increase"><Svg w={5} h={3}><path d="M0 3h5L2.500 0z" fill="#777" /></Svg></button>
          <button type="button" aria-label="Decrease"><Caret color="#777" /></button>
        </span>
      </div>
    </div>
  )
}

function Watermark() {
  return (
    <svg width="190" height="95" className="pointer-events-none absolute bottom-4 right-[39px]" fill="#fff" stroke="#dedede" strokeWidth="1.500">
      <ellipse cx="78" cy="26" rx="7" ry="9" />
      <ellipse cx="91" cy="13" rx="7" ry="9" />
      <ellipse cx="107" cy="13" rx="7" ry="9" />
      <ellipse cx="117" cy="29" rx="7" ry="9" />
      <path d="M97 27c9 0 12 8 18 14 8 8 4 21-6 20-8-2-15-2-23 0-11 1-15-12-7-20 6-6 9-14 18-14z" />
      <g className="font-['Liberation_Sans'] font-bold">
        <text x="8" y="58" fontSize="38">Bai</text>
        <text x="80" y="54" fontSize="25">du</text>
      </g>
      <text x="126" y="56" fontSize="32" className="font-['Noto_Sans_CJK_SC'] font-bold">经验</text>
      <text x="10" y="82" fontSize="21" strokeWidth="1" className="font-['Open_Sans'] font-semibold">jingyan.baidu.com</text>
    </svg>
  )
}

function FillPanel() {
  return (
    <aside className="ml-1 flex w-[350px] shrink-0 flex-col">
      <div className="flex h-[26px] items-center justify-between pl-[5px] pr-2.5 pt-px">
        <h2 className="text-[15px] text-[#444]">Fill</h2>
        <button aria-label="Close fill panel"><Cross size={10} /></button>
      </div>
      <div className="flex min-h-0 flex-1">
        <div className="flex w-8 flex-col gap-2.5 border-r border-[#d5d5d5]">
          {sideIcons.map((s, i) => (
            <button key={s.label} aria-label={s.label} className={clsx('grid size-[30px] place-items-center', i === 0 && 'bg-[#c3c3c3]')}>{s.icon}</button>
          ))}
        </div>
        <form className="relative grow pl-1.5 pr-[3px] pt-1.5 text-black">
          <fieldset className="mr-px flex h-[170px] flex-col border border-[#e8e8e8] pl-[9px] pt-[5px]">
            {fillKinds.map(k => (
              <label key={k} className="flex h-[26px] items-center gap-1">
                <input
                  type="radio"
                  name="fill"
                  defaultChecked={k === 'Solid fill'}
                  className="size-3 appearance-none rounded-full border border-[#c4c4c4] checked:bg-[#b5b5b5] checked:shadow-[inset_0_0_0_2px_white]"
                />
                {k}
              </label>
            ))}
          </fieldset>
          <div className="flex flex-col gap-2.5 pl-[9px] pt-[14px]">
            <div className="flex h-6 items-center justify-between">
              <span>Color:</span>
              <button type="button" aria-label="Color" className="flex h-6 w-16 items-center gap-0.5 border border-[#b8b8b8] pl-[5px]">
                <span className="h-[13px] w-[47px] bg-[#00b050]" />
                <Caret color="#777" />
              </button>
            </div>
            <SliderRow id="shade" label="Shade/Tint:" value={50} track="bg-linear-to-r from-[#666] from-50% to-[#ccc] to-50%" />
            <SliderRow id="transparency" label="Transparency:" value={0} track="bg-linear-to-r from-[#ccc] to-[#ccc]" />
          </div>
          <Watermark />
        </form>
        <div className="mr-0.5 flex w-[17px] flex-col bg-[#ececec]">
          <ScrollArrow dir="up" />
          <div className="mb-[9px] flex-1 border border-t-0 border-[#bdbdbd] bg-white" />
          <ScrollArrow dir="down" />
        </div>
      </div>
    </aside>
  )
}

export default function App() {
  return (
    <div className="flex h-screen flex-col overflow-hidden bg-white font-['Open_Sans','Noto_Sans_CJK_SC',sans-serif] text-[13px] leading-[17px]">
      <TitleBar />
      <MenuBar />
      <Ribbon />
      <div className="flex min-h-0 flex-1">
        <Libraries />
        <Workspace />
        <FillPanel />
      </div>
    </div>
  )
}
